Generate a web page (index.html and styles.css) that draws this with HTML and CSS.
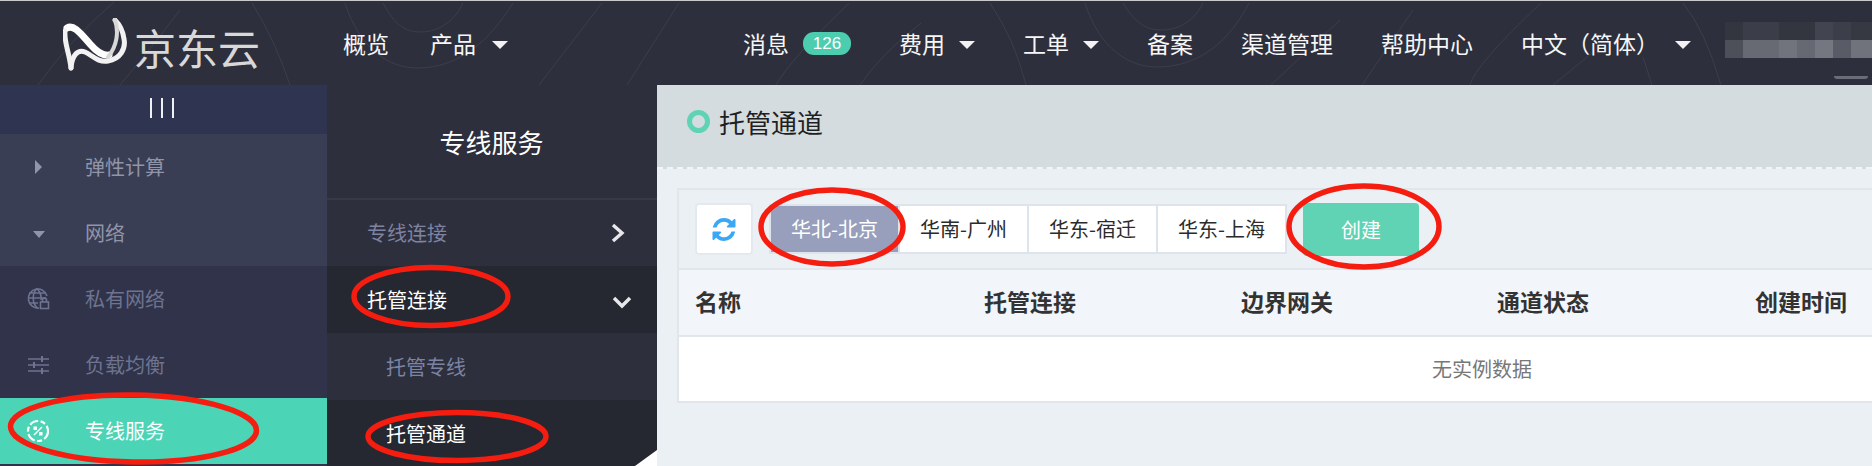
FILE: index.html
```html
<!DOCTYPE html>
<html lang="zh-CN">
<head>
<meta charset="utf-8">
<title>托管通道</title>
<link rel="stylesheet" href="styles.css">
</head>
<body>
<div class="app">
  <header class="header">
    <svg class="header-lines" width="1872" height="84" viewBox="0 1 1872 84" fill="none">
      <path d="M38 85 Q70 40 114 2M120 85 Q150 50 180 10M252 3 Q275 40 290 85M345 3 C360 50 390 68 417 68 C460 68 490 40 513 3M383 3 C395 25 405 32 421 32 C440 32 455 20 463 3M539 85 L602 3M627 85 L679 3M776 85 Q790 60 849 3M860 85 Q880 55 921 23M990 3 Q1015 40 1026 85M1085 3 C1100 50 1130 67 1157 67 C1200 67 1230 40 1249 3M1123 3 C1135 22 1145 30 1161 30 C1180 30 1195 20 1203 3M1271 85 L1340 20M1362 85 L1413 10M1470 85 Q1475 65 1541 3M1553 85 L1592 53M1643 57 L1652 85M1683 3 Q1705 30 1721 85"/>
    </svg>
    <div class="logo">
      <svg class="logo-mark" width="64" height="54" viewBox="63 17 64 54" fill="none">
        <path class="ribbon-thick" d="M67 27 C74 23 81 33 90 43 C96 50 103 55 109 54"/>
        <path class="ribbon-mid" d="M65 30 C64 42 69 50 71 67"/>
        <path class="ribbon-mid" d="M71 67 C72 54 78 48 85 51 C92 54 98 62 108 60 C120 58 126 48 124 38 C123 30 120 24 115 19"/>
        <path class="ribbon-thin" d="M115 19 C119 31 117 45 108 56"/>
      </svg>
      <span class="logo-text">京东云</span>
    </div>
    <nav class="nav nav-left">
      <span class="nav-item">概览</span>
      <span class="nav-item">产品<i class="caret caret-wide"></i></span>
    </nav>
    <nav class="nav nav-right">
      <span class="nav-item">消息<b class="badge">126</b></span>
      <span class="nav-item">费用<i class="caret"></i></span>
      <span class="nav-item">工单<i class="caret"></i></span>
      <span class="nav-item">备案</span>
      <span class="nav-item">渠道管理</span>
      <span class="nav-item">帮助中心</span>
      <span class="nav-item">中文（简体）<i class="caret caret-wide"></i></span>
    </nav>
    <div class="user"><div class="user-blur"></div><div class="user-arc"></div></div>
  </header>
  <div class="body">
    <aside class="sidebar">
      <div class="toggle"><i></i><i></i><i></i></div>
      <div class="side-group">
        <div class="side-row"><span class="side-icon"><i class="tri-right"></i></span>弹性计算</div>
        <div class="side-row"><span class="side-icon"><i class="tri-down"></i></span>网络</div>
      </div>
      <div class="side-row side-sub">
        <span class="side-icon">
          <svg width="24" height="24" viewBox="0 0 24 24" fill="none" stroke="#6e7390" stroke-width="1.6">
            <path d="M13 21 A9.5 9.5 0 1 1 21 9"/><path d="M2 11H20M3 6H19M3 16H12M11 1.5C6 6 6 16 11 20.5M11 1.5C15 6 15.5 10 15 13"/>
            <rect x="14.5" y="15" width="8" height="6.5"/><path d="M16.5 15V13C16.5 10.5 20.5 10.5 20.5 13V15"/>
          </svg>
        </span>私有网络
      </div>
      <div class="side-row side-sub">
        <span class="side-icon">
          <svg width="24" height="24" viewBox="0 0 24 24" fill="none" stroke="#6e7390" stroke-width="2">
            <path d="M2 6H23M2 12H23M2 18H23" stroke-width="1.6"/><path d="M16 3V9M8 9V15M16 15V21"/>
          </svg>
        </span>负载均衡
      </div>
      <div class="side-row side-active">
        <span class="side-icon">
          <svg width="24" height="24" viewBox="0 0 24 24" fill="none" stroke="#fff" stroke-width="2.2">
            <circle cx="12" cy="12" r="10" stroke-dasharray="9 2.5 5 2.5"/>
            <rect x="7.5" y="7.5" width="3.5" height="3.5" fill="#fff" stroke="none"/><rect x="13" y="13" width="3.5" height="3.5" fill="#fff" stroke="none"/><path d="M16 8L8 16" stroke-width="1.4"/>
          </svg>
        </span>专线服务
      </div>
    </aside>
    <section class="subnav">
      <h2 class="subnav-title">专线服务</h2>
      <div class="sub-row sub-first">专线连接
        <svg class="chev" width="14" height="20" viewBox="0 0 14 20" fill="none"><path d="M2 2L11 10L2 18"/></svg>
      </div>
      <div class="sub-row sub-open">托管连接
        <svg class="chev chev-down" width="20" height="13" viewBox="0 0 20 13" fill="none"><path d="M2 2L10 10L18 2"/></svg>
      </div>
      <div class="sub-row sub-child">托管专线</div>
      <div class="sub-row sub-child sub-current">托管通道</div>
      <i class="corner"></i>
    </section>
    <main class="main">
      <div class="page-title"><i class="ring"></i><h1>托管通道</h1></div>
      <div class="panel">
        <div class="toolbar">
          <button class="refresh">
            <svg width="24" height="23" viewBox="0 0 1536 1536"><path fill="#3aa8f5" d="M1511 928q0 5-1 7-64 268-268 434.5t-478 166.5q-146 0-282.5-55t-243.5-157l-129 129q-19 19-45 19t-45-19-19-45v-448q0-26 19-45t45-19h448q26 0 45 19t19 45-19 45l-137 137q71 66 161 102t187 36q134 0 250-65t186-179q11-17 53-117 8-23 30-23h192q13 0 22.5 9.5t9.5 22.5zm25-800v448q0 26-19 45t-45 19h-448q-26 0-45-19t-19-45 19-45l138-138q-148-137-349-137-134 0-250 65t-186 179q-11 17-53 117-8 23-30 23h-199q-13 0-22.5-9.5t-9.5-22.5v-7q65-268 270-434.5t480-166.5q146 0 284 55.5t245 156.5l130-129q19-19 45-19t45 19 19 45z"/></svg>
          </button>
          <div class="tabs">
            <span class="tab tab-on">华北-北京</span>
            <span class="tab">华南-广州</span>
            <span class="tab">华东-宿迁</span>
            <span class="tab">华东-上海</span>
          </div>
          <button class="create">创建</button>
        </div>
        <div class="thead">
          <span>名称</span><span>托管连接</span><span>边界网关</span><span>通道状态</span><span>创建时间</span>
        </div>
        <div class="empty">无实例数据</div>
      </div>
    </main>
  </div>
  <svg class="marks" width="1872" height="466" viewBox="0 0 1872 466" fill="none">
    <ellipse cx="133.5" cy="428.5" rx="123" ry="33.5" transform="rotate(1 133.5 428)"/>
    <ellipse cx="431" cy="296.5" rx="77" ry="29"/>
    <ellipse cx="457" cy="436.5" rx="89" ry="24"/>
    <ellipse cx="832" cy="227" rx="71" ry="37"/>
    <ellipse cx="1364" cy="226.5" rx="75" ry="40.5"/>
  </svg>
</div>
</body>
</html>
```

FILE: styles.css
```css
* { box-sizing: border-box; }
html, body { margin: 0; padding: 0; }
body {
  font-family: "Noto Sans CJK SC", "Liberation Sans", sans-serif;
  background: #ebf0f5;
  overflow: hidden;
}
.app {
  position: relative;
  width: 1872px;
  height: 466px;
  overflow: hidden;
  border-top: 1px solid #c9c9cc;
  display: flex;
  flex-direction: column;
}

/* header */
.header {
  position: relative;
  height: 84px;
  flex: none;
  background: #2d2f3c;
  display: flex;
  align-items: center;
  color: #f6f6f6;
}
.header-lines {
  position: absolute;
  left: 0;
  top: 0;
  stroke: #3c3e4b;
  stroke-width: 1;
}
.logo {
  position: relative;
  width: 343px;
  height: 84px;
  flex: none;
  padding-left: 63px;
  display: flex;
  align-items: center;
}
.logo-mark { flex: none; margin-top: 4px; }
.ribbon-thick { stroke: #fff; stroke-width: 7; stroke-linecap: round; }
.ribbon-mid { stroke: #f2f2f2; stroke-width: 5; stroke-linecap: round; }
.ribbon-thin { stroke: #d8d8d8; stroke-width: 4; stroke-linecap: round; }
.logo-text {
  margin-left: 7px;
  font-size: 42px;
  line-height: 50px;
  font-weight: 400;
  color: #d8d8d8;
  margin-top: 7px;
}
.nav {
  position: relative;
  display: flex;
  align-items: center;
  font-size: 23px;
  line-height: 30px;
}
.nav-left { gap: 41px; }
.nav-right { gap: 48px; margin-left: auto; }
.nav-item { display: flex; align-items: center; }
.caret {
  width: 0;
  height: 0;
  margin-left: 14px;
  margin-top: 3px;
  border-left: 8.5px solid transparent;
  border-right: 8.5px solid transparent;
  border-top: 8px solid #f2f2f2;
}
.caret-wide { margin-left: 16px; }
.badge {
  margin-left: 14px;
  width: 48px;
  height: 23px;
  border-radius: 11px;
  background: #4dcdb0;
  color: #fff;
  font-family: "Liberation Sans", sans-serif;
  font-weight: 400;
  font-size: 17px;
  line-height: 23px;
  text-align: center;
}
.user {
  position: relative;
  flex: none;
  width: 147px;
  height: 84px;
  margin-left: 34px;
}
.user-blur {
  position: absolute;
  left: 0;
  top: 21px;
  width: 147px;
  height: 36px;
  background:
    linear-gradient(90deg, #34363f 0 18px, #3b3d48 18px 54px, #34363f 54px 90px, #424450 90px 108px, #3c3e49 108px 126px, #363842 126px) top / 100% 18px no-repeat,
    linear-gradient(90deg, #4d4f59 0 18px, #676a73 18px 54px, #71747d 54px 72px, #666972 72px 90px, #747780 90px 108px, #595c66 108px 126px, #70737c 126px) bottom / 100% 18px no-repeat;
}
.user-arc {
  position: absolute;
  left: 109px;
  top: 75px;
  width: 34px;
  height: 3px;
  border-radius: 0 0 17px 17px;
  background: #6a6d78;
}

/* layout */
.body { flex: 1; display: flex; min-height: 0; }

/* sidebar */
.sidebar {
  width: 327px;
  flex: none;
  background: #30334a;
  font-size: 20px;
}
.toggle {
  height: 49px;
  background: #2f3450;
  display: flex;
  justify-content: center;
  padding: 13px 3px 0 0;
  gap: 9px;
}
.toggle i { width: 2px; height: 20px; background: #f0f0f5; }
.side-group { background: #393e54; }
.side-row {
  height: 66px;
  display: flex;
  align-items: center;
  padding-left: 26px;
  color: #9095a9;
  line-height: 30px;
}
.side-sub { color: #6e7390; }
.side-active { background: #4bd4b5; color: #fff; }
.side-icon {
  width: 59px;
  flex: none;
  display: flex;
  align-items: center;
}
.tri-right {
  margin-left: 9px;
  border-top: 7px solid transparent;
  border-bottom: 7px solid transparent;
  border-left: 7px solid #9095a9;
}
.tri-down {
  margin-left: 7px;
  margin-top: 2px;
  border-left: 6px solid transparent;
  border-right: 6px solid transparent;
  border-top: 7px solid #9095a9;
}

/* sub navigation */
.subnav {
  position: relative;
  width: 330px;
  flex: none;
  background: #2d2f3c;
}
.subnav-title {
  margin: 0;
  height: 115px;
  border-bottom: 2px solid #363947;
  font-size: 26px;
  font-weight: 400;
  line-height: 114px;
  padding-right: 1px;
  text-align: center;
  color: #fff;
}
.sub-row {
  height: 67px;
  display: flex;
  align-items: center;
  justify-content: space-between;
  padding: 0 25px 0 40px;
  font-size: 20px;
  line-height: 30px;
  color: #7d83a3;
}
.sub-first { height: 66px; padding-right: 32px; }
.sub-open { background: #252731; color: #fff; }
.sub-child { padding-left: 59px; }
.sub-current { background: #252731; color: #fff; }
.chev { stroke: #e8e8ec; stroke-width: 3.4; flex: none; }
.chev-down { margin-top: 6px; }
.corner {
  position: absolute;
  right: 0;
  bottom: 0;
  border-left: 22px solid transparent;
  border-bottom: 16px solid #fff;
}

/* main */
.main { flex: 1; min-width: 0; }
.page-title {
  height: 84px;
  background: #d4dce0;
  border-bottom: 2px dashed #f2f5f7;
  display: flex;
  align-items: center;
  padding: 0 0 9px 30px;
  gap: 9px;
}
.ring {
  width: 23px;
  height: 23px;
  border-radius: 50%;
  border: 5px solid #5fd3b4;
}
.page-title h1 {
  margin: 0;
  font-size: 26px;
  font-weight: 400;
  line-height: 34px;
  color: #1f1f1f;
}
.panel {
  margin: 19px 0 0 20px;
  border: 2px solid #e0e6ec;
  border-right: none;
}
.toolbar {
  height: 80px;
  display: flex;
  align-items: center;
  padding: 0 0 0 16px;
  border-bottom: 2px solid #e0e6ec;
}
.refresh {
  width: 58px;
  height: 52px;
  padding: 0;
  border: 2px solid #e3e9ee;
  border-radius: 4px;
  background: #fff;
  display: flex;
  align-items: center;
  justify-content: center;
}
.tabs {
  margin-left: 16px;
  height: 50px;
  display: flex;
  gap: 2px;
  padding: 2px;
  background: #dde4eb;
}
.tab {
  width: 127px;
  background: #fff;
  font-size: 20px;
  line-height: 45px;
  text-align: center;
  color: #2b2b2b;
}
.tab-on { background: #989fbc; color: #fff; }
.create {
  margin-left: 16px;
  width: 116px;
  height: 53px;
  border: none;
  border-radius: 4px;
  background: #5fd3b4;
  color: #fff;
  font-family: inherit;
  font-size: 20px;
}
.thead {
  height: 67px;
  background: #f2f5fa;
  border-bottom: 2px solid #e0e6ec;
  display: grid;
  grid-template-columns: 289px 257px 256px 258px 1fr;
  align-items: center;
  padding: 0 0 3px 16px;
  font-size: 23px;
  font-weight: 700;
  color: #333;
}
.empty {
  height: 64px;
  background: #fff;
  font-size: 20px;
  line-height: 64px;
  text-align: center;
  color: #777;
  padding-left: 413px;
}

/* hand-drawn annotations */
.marks {
  position: absolute;
  left: 0;
  top: -1px;
  stroke: #f51c10;
  stroke-width: 5.5;
  pointer-events: none;
}
```
